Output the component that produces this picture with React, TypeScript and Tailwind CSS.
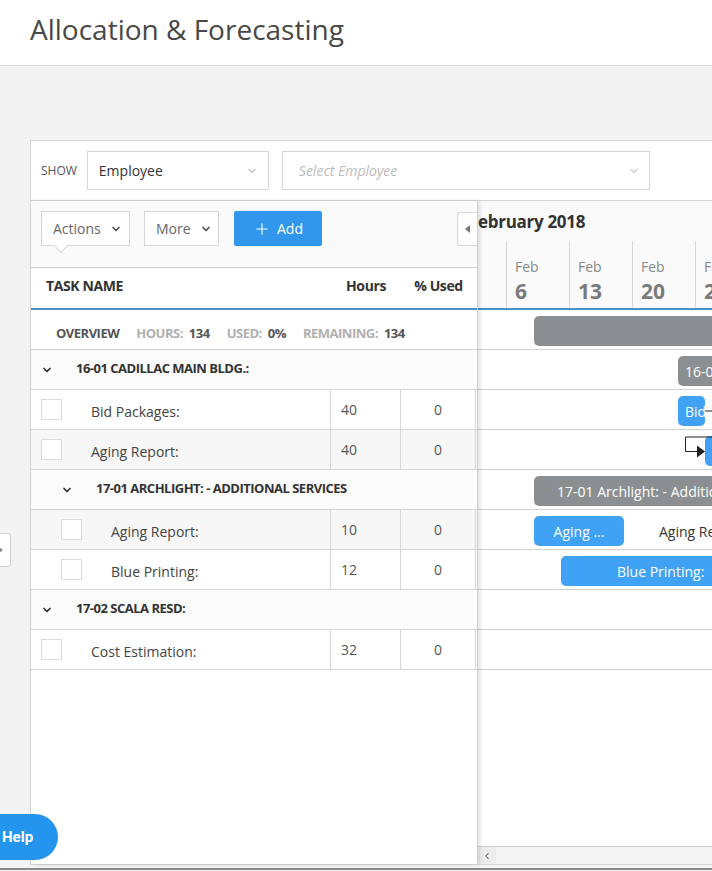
import { ChevronDown, ChevronLeft, Plus } from 'lucide-react';

type Task = { type: 'task'; name: string; hours: number; used: number; indent: boolean; shaded: boolean };
type Group = { type: 'group'; label: string; indent: boolean };
type Row = Task | Group;

const rows: Row[] = [
  { type: 'group', label: '16-01 CADILLAC MAIN BLDG.:', indent: false },
  { type: 'task', name: 'Bid Packages:', hours: 40, used: 0, indent: false, shaded: false },
  { type: 'task', name: 'Aging Report:', hours: 40, used: 0, indent: false, shaded: true },
  { type: 'group', label: '17-01 ARCHLIGHT: - ADDITIONAL SERVICES', indent: true },
  { type: 'task', name: 'Aging Report:', hours: 10, used: 0, indent: true, shaded: true },
  { type: 'task', name: 'Blue Printing:', hours: 12, used: 0, indent: true, shaded: false },
  { type: 'group', label: '17-02 SCALA RESD:', indent: false },
  { type: 'task', name: 'Cost Estimation:', hours: 32, used: 0, indent: false, shaded: false },
];

const days = [
  { m: 'Feb', d: '6' },
  { m: 'Feb', d: '13' },
  { m: 'Feb', d: '20' },
  { m: 'Feb', d: '27' },
];

function TaskRow({ row }: { row: Row }) {
  if (row.type === 'group') {
    return (
      <div className={`flex h-[40px] items-center border-b border-[#d6d6d6] bg-[#fbfbfb] ${row.indent ? 'pl-[30px]' : 'pl-[10px]'}`}>
        <ChevronDown className="w-[12px] h-[12px] text-[#333]" strokeWidth={3.5} />
        <span className="ml-[23px] mb-[1px] text-[13px] font-bold tracking-[-0.5px] text-[#333]">{row.label}</span>
      </div>
    );
  }
  return (
    <div className={`flex h-[40px] border-b border-[#d6d6d6] ${row.shaded ? 'bg-[#f7f7f7]' : 'bg-white'}`}>
      <div className={`flex w-[300px] items-center border-r border-[#d6d6d6] ${row.indent ? 'pl-[30px]' : 'pl-[10px]'}`}>
        <span className="w-[21px] h-[21px] border border-[#dcdcdc] bg-white" />
        <span className="ml-[29px] mt-[3px] text-[14px] text-[#444]">{row.name}</span>
      </div>
      <div className="flex w-[70px] items-center border-r border-[#d6d6d6] pl-[10px] text-[14px] text-[#555]">
        {row.hours}
      </div>
      <div className="flex w-[75px] items-center justify-center border-r border-[#d6d6d6] text-[14px] text-[#555]">
        {row.used}
      </div>
    </div>
  );
}

function Bar({ left, width, color, children, pl }: { left: number; width: number; color: 'gray' | 'blue'; children?: React.ReactNode; pl?: number }) {
  return (
    <div
      className={`absolute top-[6px] h-[30px] rounded-[5px] flex items-center overflow-hidden whitespace-nowrap text-[14px] text-white ${
        color === 'gray' ? 'bg-[#8b8f92]' : 'bg-[#40a2f4]'
      } ${pl === undefined ? 'justify-center' : ''}`}
      style={{ left, width, paddingLeft: pl }}
    >
      {children}
    </div>
  );
}

function GanttRow({ children }: { children?: React.ReactNode }) {
  return <div className="relative h-[40px] border-b border-[#d0d0d0]">{children}</div>;
}

export default function App() {
  return (
    <div className="relative w-[712px] h-[871px] overflow-hidden bg-[#f3f3f3] font-['Open_Sans',sans-serif]">
      {/* Header */}
      <div className="h-[66px] border-b border-[#dcdcdc] bg-white pl-[30px] pt-[9px]">
        <h1 className="text-[28px] leading-[40px] text-[#484848]">Allocation &amp; Forecasting</h1>
      </div>

      {/* Main panel */}
      <div className="ml-[30px] mt-[74px] w-[720px] h-[725px] flex flex-col border border-[#d6d6d6] bg-white">
        {/* Filter bar */}
        <div className="flex h-[60px] shrink-0 items-center border-b border-[#d6d6d6] pl-[10px]">
          <span className="text-[12px] text-[#555]">SHOW</span>
          <div className="ml-[10px] flex h-[39px] w-[182px] items-center justify-between border border-[#d6d6d6] pl-[11px] pr-[10px]">
            <span className="text-[14px] text-[#333]">Employee</span>
            <ChevronDown className="w-[12px] h-[12px] text-[#666]" strokeWidth={1.5} />
          </div>
          <div className="ml-[13px] flex h-[39px] w-[368px] items-center justify-between border border-[#d6d6d6] pl-[16px] pr-[9px]">
            <span className="text-[14px] italic text-[#bbb]">Select Employee</span>
            <ChevronDown className="w-[12px] h-[12px] text-[#888]" strokeWidth={1.5} />
          </div>
        </div>

        <div className="flex flex-1 min-h-0">
          {/* Left grid */}
          <div className="relative z-10 flex w-[447px] shrink-0 flex-col border-r border-[#cfcfcf] bg-white shadow-[2px_0_4px_rgba(0,0,0,0.12)]">
            <div className="flex h-[67px] shrink-0 items-start border-b border-[#cfcfcf] bg-[#fafafa] pl-[10px] pt-[10px]">
              <div className="relative flex h-[35px] w-[89px] items-center border border-[#d6d6d6] bg-white pl-[11px]">
                <span className="text-[14px] text-[#666]">Actions</span>
                <ChevronDown className="ml-[9px] w-[12px] h-[12px] text-[#555]" strokeWidth={3.5} />
                <span className="absolute left-[14px] top-[29px] h-[10px] w-[10px] rotate-45 border-b border-r border-[#d6d6d6] bg-white" />
              </div>
              <div className="ml-[14px] flex h-[35px] w-[75px] items-center border border-[#d6d6d6] bg-white pl-[11px]">
                <span className="text-[14px] text-[#666]">More</span>
                <ChevronDown className="ml-[9px] w-[12px] h-[12px] text-[#555]" strokeWidth={3.5} />
              </div>
              <button className="ml-[15px] flex h-[35px] w-[88px] items-center justify-center gap-[6px] rounded-[2px] bg-[#3097ec] text-white">
                <Plus className="w-[18px] h-[18px]" strokeWidth={1.5} />
                <span className="text-[14px]">Add</span>
              </button>
              <div className="ml-auto mt-[1px] flex h-[34px] w-[20px] items-center justify-center rounded-l-[3px] border border-r-0 border-[#d6d6d6] bg-white">
                <svg width="5" height="8" viewBox="0 0 5 8">
                  <path d="M5 0 L0 4 L5 8 Z" fill="#777" />
                </svg>
              </div>
            </div>
            <div className="flex h-[42px] shrink-0 items-center border-b-2 border-[#4a90c4] pb-[5px] text-[14px] font-bold tracking-[-0.4px] text-[#333]">
              <span className="w-[300px] pl-[15px]">TASK NAME</span>
              <span className="w-[70px] text-center">Hours</span>
              <span className="w-[75px] text-center">% Used</span>
            </div>
            <div className="flex h-[40px] shrink-0 items-center border-b border-[#cfcfcf] pl-[25px] pt-[9px] text-[13px] font-bold tracking-[-0.5px]">
              <span className="text-[#555]">OVERVIEW</span>
              <span className="ml-[17px] text-[#b0b0b0]">HOURS:</span>
              <span className="ml-[6px] text-[#555]">134</span>
              <span className="ml-[17px] text-[#b0b0b0]">USED:</span>
              <span className="ml-[6px] text-[#555]">0%</span>
              <span className="ml-[17px] text-[#b0b0b0]">REMAINING:</span>
              <span className="ml-[6px] text-[#555]">134</span>
            </div>
            {rows.map((r, i) => (
              <TaskRow key={i} row={r} />
            ))}
            <div className="flex-1" />
          </div>

          {/* Gantt */}
          <div className="relative flex min-w-0 flex-1 flex-col overflow-hidden">
            <div className="shrink-0 bg-[#fafafa]">
              <div className="flex h-[40px] items-center pt-[2px]">
                <span className="ml-[-9px] text-[17px] font-bold tracking-[-0.3px] text-[#333]">February 2018</span>
              </div>
              <div className="flex h-[69px] border-b-2 border-[#4a90c4]">
                <div className="w-[28px] shrink-0" />
                {days.map((d, i) => (
                  <div key={i} className="w-[63px] shrink-0 border-l border-[#d6d6d6] pl-[8px] pt-[16px]">
                    <div className="text-[14px] leading-[20px] text-[#888]">{d.m}</div>
                    <div className="text-[21px] font-bold leading-[28px] text-[#7a7a7a]">{d.d}</div>
                  </div>
                ))}
              </div>
            </div>
            <div className="relative flex-1">
              <GanttRow>
                <Bar left={56} width={400} color="gray" />
              </GanttRow>
              <GanttRow>
                <Bar left={200} width={160} color="gray" pl={7}>16-01 Cadillac Main Bldg.:</Bar>
              </GanttRow>
              <GanttRow>
                <Bar left={200} width={27} color="blue" pl={7}>Bid Packages:</Bar>
              </GanttRow>
              <GanttRow>
                <Bar left={227} width={120} color="blue" pl={8}>Aging Report:</Bar>
              </GanttRow>
              <GanttRow>
                <Bar left={56} width={400} color="gray" pl={23}>17-01 Archlight: - Additional Services</Bar>
              </GanttRow>
              <GanttRow>
                <Bar left={56} width={90} color="blue">Aging ...</Bar>
                <span className="absolute left-[181px] top-[11px] whitespace-nowrap text-[14px] text-[#333]">Aging Report:</span>
              </GanttRow>
              <GanttRow>
                <Bar left={83} width={200} color="blue" pl={56}>Blue Printing:</Bar>
              </GanttRow>
              <GanttRow />
              <GanttRow />
              <svg className="absolute left-0 top-0" width="240" height="160" viewBox="0 0 240 160">
                <path d="M227 101 H240" stroke="#222" strokeWidth="1" fill="none" />
                <path d="M240 127 H207.5 V141.5 H219" stroke="#222" strokeWidth="1" fill="none" />
                <path d="M219 135.5 L227 141.5 L219 147.5 Z" fill="#222" />
              </svg>
            </div>
            <div className="flex h-[18px] shrink-0 items-center border-t border-[#d0d0d0] bg-[#f4f4f4]">
              <div className="flex h-full w-[18px] items-center justify-center bg-[#ececec]">
                <ChevronLeft className="w-[10px] h-[10px] text-[#555]" strokeWidth={2.5} />
              </div>
            </div>
          </div>
        </div>
      </div>

      {/* bottom edge */}
      <div className="absolute left-0 top-[868px] h-[2px] w-full bg-[#8a8a8a]" />

      {/* Left side tab */}
      <div className="absolute z-20 left-[-4px] top-[533px] flex h-[34px] w-[15px] items-center justify-end rounded-[3px] border border-[#d0d0d0] bg-white pr-[7px]">
        <svg width="4" height="6" viewBox="0 0 4 6">
          <path d="M0 0 L4 3 L0 6 Z" fill="#888" />
        </svg>
      </div>

      {/* Help */}
      <div className="absolute z-20 left-[-30px] top-[814px] flex h-[46px] w-[88px] items-center rounded-full bg-[#2395ee] pl-[32px] font-['Roboto',sans-serif] text-[15px] font-bold text-white">
        Help
      </div>
    </div>
  );
}
